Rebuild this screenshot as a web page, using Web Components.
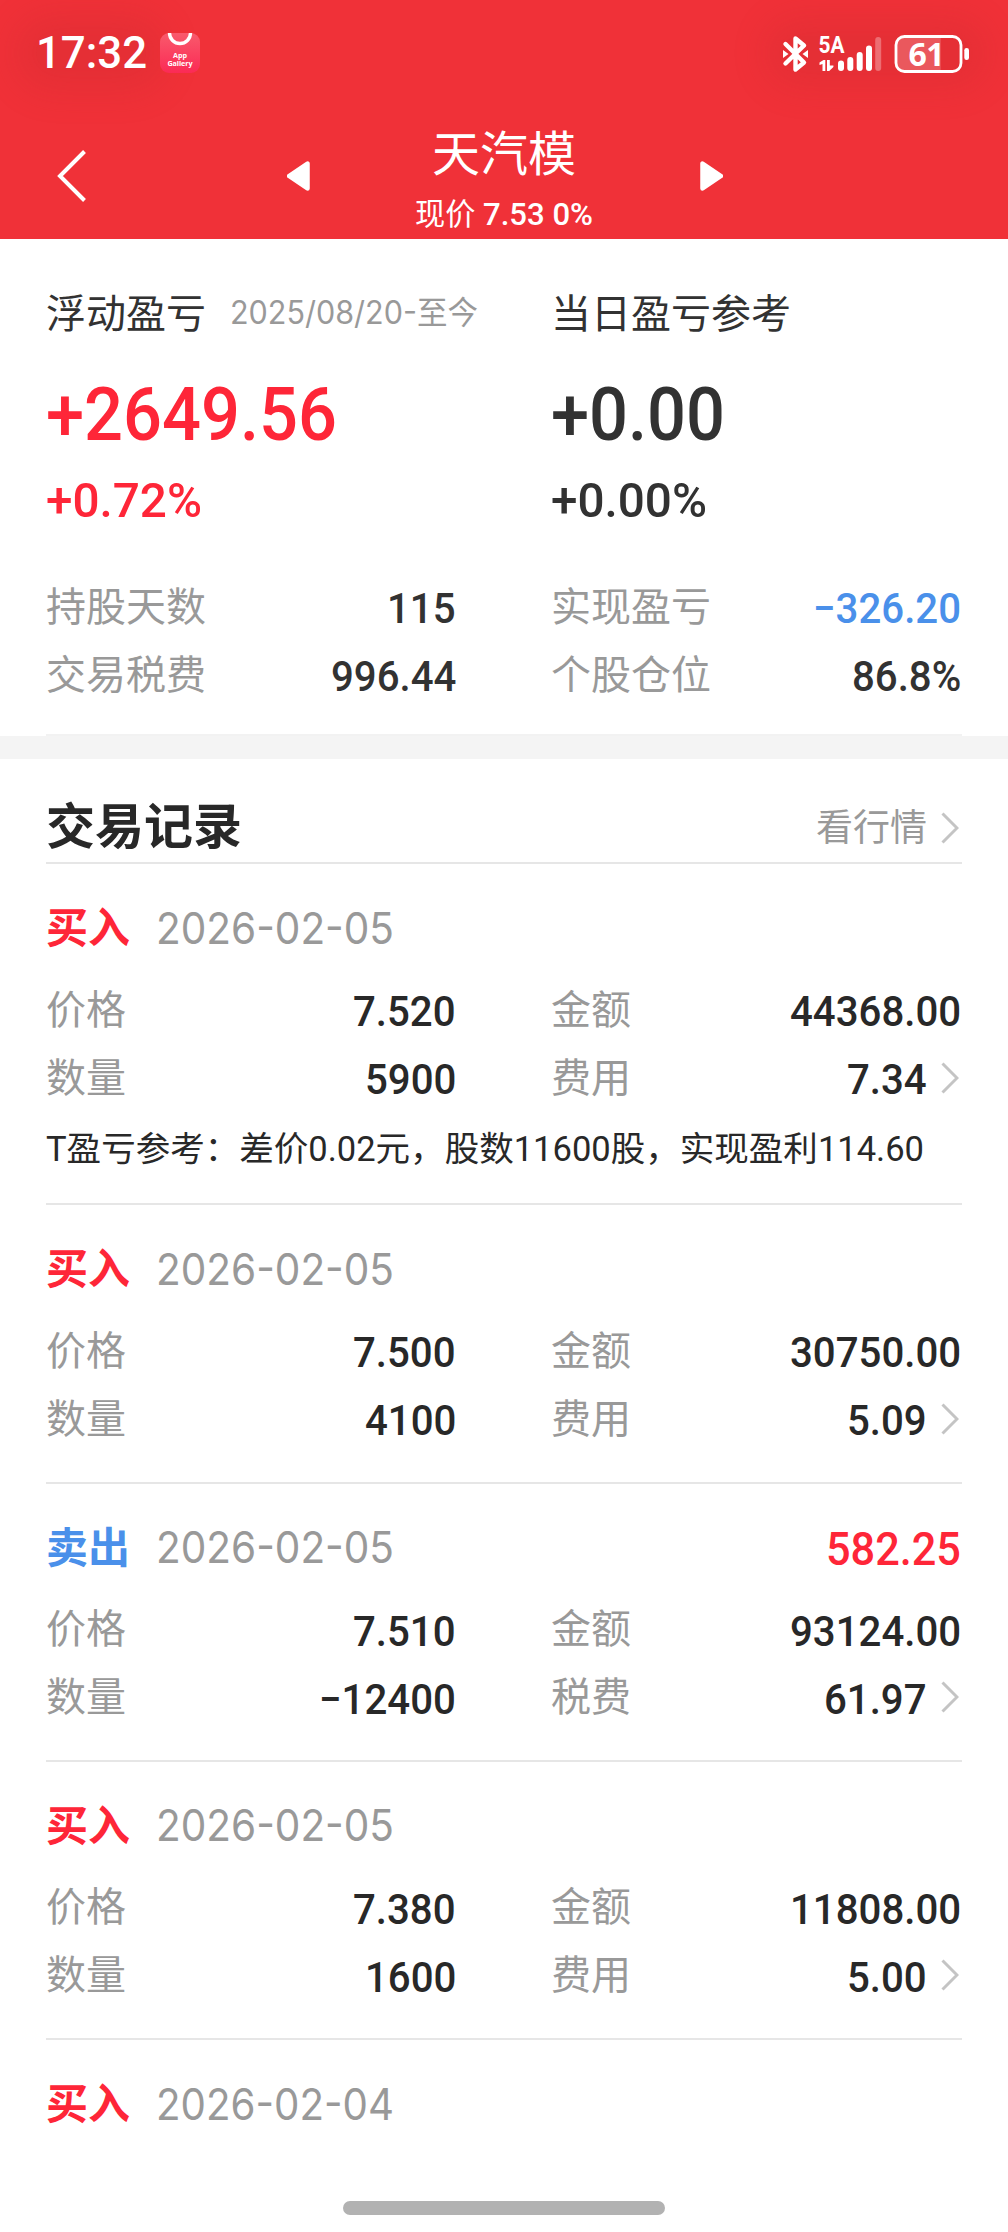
<!DOCTYPE html>
<html lang="zh-CN">
<head>
<meta charset="utf-8">
<title>天汽模</title>
<style>
  html, body {
    margin: 0;
    background: #fff;
  }
  body {
    width: 1008px;
    height: 2232px;
    overflow: hidden;
    font-family: Roboto, "Noto Sans CJK SC", sans-serif;
    color: #282828;
    --red: #fe2638;
    --blue: #4a90ea;
    --muted: #999;
    --line: #e6e6e6;
  }
</style>
</head>
<body>
<stock-page>
  <app-header slot="header" name="天汽模" price="7.53" change="0%"></app-header>

  <profit-summary slot="summary">
    <profit-column label="浮动盈亏" range="2025/08/20-至今" amount="+2649.56" amount-width="291" percent="+0.72%" tone="up">
      <data-row label="持股天数" value="115"></data-row>
      <data-row label="交易税费" value="996.44"></data-row>
    </profit-column>
    <profit-column label="当日盈亏参考" amount="+0.00" amount-width="174" percent="+0.00%">
      <data-row label="实现盈亏" value="−326.20" tone="down"></data-row>
      <data-row label="个股仓位" value="86.8%"></data-row>
    </profit-column>
  </profit-summary>

  <section-heading label="交易记录" link="看行情"></section-heading>
  <trade-record side="buy" date="2026-02-05" price="7.520" amount="44368.00" count="5900" fee="7.34">
    <fit-text slot="note" width="878">T盈亏参考：差价0.02元，股数11600股，实现盈利114.60</fit-text>
  </trade-record>
  <trade-record side="buy" date="2026-02-05" price="7.500" amount="30750.00" count="4100" fee="5.09"></trade-record>
  <trade-record side="sell" date="2026-02-05" price="7.510" amount="93124.00" count="−12400" fee="61.97" profit="582.25"></trade-record>
  <trade-record side="buy" date="2026-02-05" price="7.380" amount="11808.00" count="1600" fee="5.00"></trade-record>
  <trade-record side="buy" date="2026-02-04"></trade-record>
</stock-page>

<script>
class StockPage extends HTMLElement {
  connectedCallback() {
    this.attachShadow({ mode: "open" }).innerHTML = `
      <style>
        :host {
          display: block;
          position: relative;
          height: 2232px;
          overflow: hidden;
          background: #fff;
        }
        .records {
          padding: 0 46px;
        }
        /* system gesture bar, floats over the list */
        .home-bar {
          position: absolute;
          left: 343px;
          bottom: 17px;
          width: 322px;
          height: 14px;
          border-radius: 7px;
          background: #b2b2b2;
        }
      </style>
      <slot name="header"></slot>
      <slot name="summary"></slot>
      <div class="records"><slot></slot></div>
      <div class="home-bar"></div>
    `;
  }
}

class StatusBar extends HTMLElement {
  connectedCallback() {
    this.attachShadow({ mode: "open" }).innerHTML = `
      <style>
        :host {
          display: flex;
          align-items: center;
          height: 105px;
          padding: 0 38px 0 36px;
          box-sizing: border-box;
          color: #fff;
        }
        .time {
          font: 500 45px/60px Roboto;
        }
        .left, .right {
          display: flex;
          align-items: center;
          height: 34px;
          border-radius: 17px;
          background: rgba(190, 40, 45, .22);
        }
        .left {
          gap: 13px;
          width: 110px;
          box-shadow: 0 0 34px 20px rgba(190, 40, 45, .22);
        }
        .right {
          margin-left: auto;
          box-shadow: 0 0 34px 16px rgba(190, 40, 45, .22);
        }
        svg { display: block; flex: none; }
      </style>
      <div class="left">
        <fit-text class="time" width="111">17:32</fit-text>
        <svg width="40" height="40" viewBox="0 0 40 40">
          <defs>
            <linearGradient id="g" x1="0" y1="0" x2="0" y2="1">
              <stop offset="0" stop-color="#f95a6c"/>
              <stop offset="1" stop-color="#fb2a55"/>
            </linearGradient>
          </defs>
          <rect width="40" height="40" rx="9" fill="url(#g)"/>
          <path d="M9.500 0a10.500 10.500 0 0 0 21 0" fill="none" stroke="#fff" stroke-width="3.400"/>
          <g fill="#fff" font-family="Open Sans" font-weight="700" font-size="7.200" text-anchor="middle">
            <text x="20" y="24.500" textLength="14">App</text>
            <text x="20" y="32.500" textLength="25">Gallery</text>
          </g>
        </svg>
      </div>
      <div class="right">
        <svg width="188" height="40" viewBox="783 33 188 40">
          <g fill="none" stroke="#fff" stroke-width="4.400" stroke-linecap="round" stroke-linejoin="round">
            <path d="M786.500 44l18.500 18.500l-8.500 7v-31l8.500 7l-18.500 18"/>
          </g>
          <path d="M784 50l5.500 4l-5.500 4zM809 50l-5.500 4l5.500 4z" fill="#fff"/>
          <text x="819.500" y="53" font-family="Roboto" font-weight="700" font-size="23" fill="#fff" textLength="26" lengthAdjust="spacingAndGlyphs">5A</text>
          <path d="M820.500 65v-2.500l4-2.500h1.800v11h-2.800v-7zM828 60h2.800v5.500h3.600v1.500l-4.200 4h-2.200z" fill="#fff"/>
          <g fill="#fff">
            <rect x="839" y="60.500" width="6" height="10.500" rx="3"/>
            <rect x="848.300" y="57" width="6" height="14" rx="3"/>
            <rect x="857.700" y="52" width="6" height="19" rx="3"/>
            <rect x="867" y="45.500" width="6" height="25.500" rx="3"/>
            <rect x="876.200" y="37" width="6" height="34" rx="3" opacity=".3"/>
            <path d="M905 37h36.700v34h-36.700a8 8 0 0 1-8-8v-18a8 8 0 0 1 8-8z" opacity=".2"/>
            <rect x="965.300" y="48" width="4.700" height="12" rx="2.300"/>
            <text x="909.500" y="65.500" font-family="Open Sans" font-weight="700" font-size="32" textLength="36">61</text>
          </g>
          <rect x="897" y="36.500" width="65" height="35" rx="8.500" fill="none" stroke="#fff" stroke-width="2.800"/>
        </svg>
      </div>
    `;
  }
}

class AppHeader extends HTMLElement {
  connectedCallback() {
    this.attachShadow({ mode: "open" }).innerHTML = `
      <style>
        :host {
          display: block;
          height: 239px;
          background: #f03138;
          color: #fff;
        }
        nav {
          display: flex;
          align-items: center;
          height: 134px;
          padding-left: 57px;
        }
        svg { display: block; margin-top: 7px; }
        .prev { margin-left: 200px; }
        .title {
          flex: none;
          width: 388px;
          padding-right: 2px;
          text-align: center;
          padding-top: 20px;
          height: 114px;
        }
        .name {
          font-size: 48px;
          line-height: 60px;
        }
        .quote {
          font-size: 32px;
          line-height: 48px;
          margin-top: 5px;
          font-weight: 500;
        }
        .quote span {
          font-size: 31px;
          font-weight: 400;
        }
      </style>
      <status-bar></status-bar>
      <nav>
        <svg width="30" height="54" viewBox="0 0 30 54"><path d="M27.500 2.500L3 27l24.500 24.500" fill="none" stroke="#fff" stroke-width="4"/></svg>
        <svg class="prev" width="23" height="30" viewBox="0 0 23 30"><path d="M2 15L20.500 2.500v25z" fill="#fff" stroke="#fff" stroke-width="4.500" stroke-linejoin="round"/></svg>
        <div class="title">
          <div class="name">${this.getAttribute("name")}</div>
          <div class="quote"><fit-text width="178"><span>现价</span> ${this.getAttribute("price")} ${this.getAttribute("change")}</fit-text></div>
        </div>
        <svg width="23" height="30" viewBox="0 0 23 30"><path d="M21 15L2.500 2.500v25z" fill="#fff" stroke="#fff" stroke-width="4.500" stroke-linejoin="round"/></svg>
      </nav>
    `;
  }
}

class ProfitSummary extends HTMLElement {
  connectedCallback() {
    this.attachShadow({ mode: "open" }).innerHTML = `
      <style>
        :host {
          display: block;
          padding-top: 46px;
          border-bottom: 23px solid #f4f4f4;
          color: #323232;
        }
        .columns {
          display: grid;
          grid-template-columns: repeat(2, minmax(0, 1fr));
          column-gap: 94px;
          margin: 0 46px;
          padding-bottom: 25px;
          border-bottom: 2px solid #f2f2f2;
        }
      </style>
      <div class="columns"><slot></slot></div>
    `;
  }
}

class ProfitColumn extends HTMLElement {
  connectedCallback() {
    const range = this.getAttribute("range");
    this.attachShadow({ mode: "open" }).innerHTML = `
      <style>
        :host { display: block; }
        :host([tone="up"]) .figure { color: var(--red); }
        .head {
          display: flex;
          align-items: center;
          gap: 24px;
          font-size: 40px;
          line-height: 56px;
          white-space: nowrap;
        }
        .label { padding-top: 2px; margin-bottom: -2px; }
        .range {
          font-size: 32px;
          color: var(--muted);
          font-family: Inter, "Noto Sans CJK SC", sans-serif;
        }
        .figure { font-weight: 500; }
        .amount {
          font-size: 74px;
          line-height: 90px;
          margin-top: 29px;
        }
        .percent {
          font-size: 49px;
          line-height: 60px;
          margin: 11px 0 42px;
        }
      </style>
      <div class="head">
        <span class="label">${this.getAttribute("label")}</span>
        ${range ? `<fit-text class="range" width="248">${range}</fit-text>` : ""}
      </div>
      <div class="figure amount"><fit-text width="${this.getAttribute("amount-width")}">${this.getAttribute("amount")}</fit-text></div>
      <div class="figure percent"><fit-text width="156">${this.getAttribute("percent")}</fit-text></div>
      <slot></slot>
    `;
  }
}

class DataRow extends HTMLElement {
  connectedCallback() {
    this.attachShadow({ mode: "open" }).innerHTML = `
      <style>
        :host {
          display: flex;
          align-items: center;
          justify-content: space-between;
          height: 68px;
        }
        .label {
          font-size: 40px;
          line-height: 66px;
          padding-top: 1px;
          color: var(--muted);
        }
        .value {
          display: flex;
          align-items: center;
          font-size: 43px;
          line-height: 66px;
          font-weight: 500;
          padding: 2px 1px 0 0;
        }
        :host([tone="down"]) .value { color: var(--blue); }
        chevron-icon { margin: -3px 2px 0 14px; }
      </style>
      <span class="label">${this.getAttribute("label")}</span>
      <span class="value">
        <fit-text scale="0.935">${this.getAttribute("value")}</fit-text>
        ${this.hasAttribute("more") ? "<chevron-icon></chevron-icon>" : ""}
      </span>
    `;
  }
}

class ChevronIcon extends HTMLElement {
  connectedCallback() {
    this.attachShadow({ mode: "open" }).innerHTML = `
      <style>
        :host { display: block; width: 18px; height: 32px; }
        svg { display: block; }
      </style>
      <svg width="18" height="32" viewBox="0 0 18 32"><path d="M1.500 1.500L16 16L1.500 30.500" fill="none" stroke="#c4c4c4" stroke-width="3"/></svg>
    `;
  }
}

class SectionHeading extends HTMLElement {
  connectedCallback() {
    this.attachShadow({ mode: "open" }).innerHTML = `
      <style>
        :host {
          display: flex;
          align-items: center;
          justify-content: space-between;
          height: 70px;
          padding-top: 33px;
          border-bottom: 2px solid var(--line);
        }
        h2 {
          margin: 0;
          padding-top: 2px;
          font-size: 49px;
          line-height: 68px;
          font-weight: 700;
        }
        .link {
          display: flex;
          align-items: center;
          gap: 14px;
          padding: 2px 3px 0 0;
          font-size: 37px;
          line-height: 60px;
          color: var(--muted);
        }
        .link span { padding-top: 2px; }
      </style>
      <h2>${this.getAttribute("label")}</h2>
      <div class="link"><span>${this.getAttribute("link")}</span><chevron-icon></chevron-icon></div>
    `;
  }
}

class TradeRecord extends HTMLElement {
  connectedCallback() {
    const sell = this.getAttribute("side") === "sell";
    const profit = this.getAttribute("profit");
    this.attachShadow({ mode: "open" }).innerHTML = `
      <style>
        :host {
          display: block;
          padding: 35px 0 28.33px;
          border-bottom: 2px solid var(--line);
        }
        :host(:last-child) { border-bottom: 0; }
        .head {
          display: flex;
          align-items: center;
          height: 60px;
          margin-bottom: 17px;
          line-height: 60px;
        }
        .side {
          font-size: 42px;
          font-weight: 700;
          color: var(--${sell ? "blue" : "red"});
          margin-right: 26px;
        }
        .date {
          font-family: Inter, sans-serif;
          font-size: 44px;
          color: var(--muted);
          padding-bottom: 3px;
        }
        .profit {
          margin-left: auto;
          padding: 1px 1px 0 0;
          font-size: 46px;
          font-weight: 500;
          color: var(--red);
        }
        .rows {
          display: grid;
          grid-template-columns: repeat(2, minmax(0, 1fr));
          column-gap: 94px;
        }
        ::slotted([slot="note"]) {
          font-size: 34.4px;
          line-height: 48px;
          margin: 13px 0 2px;
        }
      </style>
      <div class="head">
        <span class="side">${sell ? "卖出" : "买入"}</span>
        <fit-text class="date" width="238">${this.getAttribute("date")}</fit-text>
        ${profit ? `<fit-text class="profit" scale="0.94">${profit}</fit-text>` : ""}
      </div>
      ${this.hasAttribute("price") ? `
        <div class="rows">
          <data-row label="价格" value="${this.getAttribute("price")}"></data-row>
          <data-row label="金额" value="${this.getAttribute("amount")}"></data-row>
          <data-row label="数量" value="${this.getAttribute("count")}"></data-row>
          <data-row label="${sell ? "税费" : "费用"}" value="${this.getAttribute("fee")}" more></data-row>
        </div>` : ""}
      <slot name="note"></slot>
    `;
  }
}

// Stretches one line of text horizontally to a fixed width, or by a factor.
class FitText extends HTMLElement {
  connectedCallback() {
    this.attachShadow({ mode: "open" }).innerHTML = `
      <style>
        :host {
          display: inline-block;
          white-space: nowrap;
          vertical-align: top;
        }
        span {
          display: inline-block;
          vertical-align: top;
          transform-origin: 0 50%;
        }
      </style>
      <span><slot></slot></span>
    `;
    const span = this.shadowRoot.querySelector("span");
    const natural = span.getBoundingClientRect().width;
    const scale = Number(this.getAttribute("scale")) || this.getAttribute("width") / natural;
    span.style.transform = `scaleX(${scale})`;
    span.style.marginRight = `${natural * (scale - 1)}px`;
  }
}

customElements.define("stock-page", StockPage);
customElements.define("app-header", AppHeader);
customElements.define("status-bar", StatusBar);
customElements.define("profit-summary", ProfitSummary);
customElements.define("profit-column", ProfitColumn);
customElements.define("section-heading", SectionHeading);
customElements.define("trade-record", TradeRecord);
customElements.define("data-row", DataRow);
customElements.define("chevron-icon", ChevronIcon);
// last, so that the text is measured inside its final styles
customElements.define("fit-text", FitText);
</script>
</body>
</html>
